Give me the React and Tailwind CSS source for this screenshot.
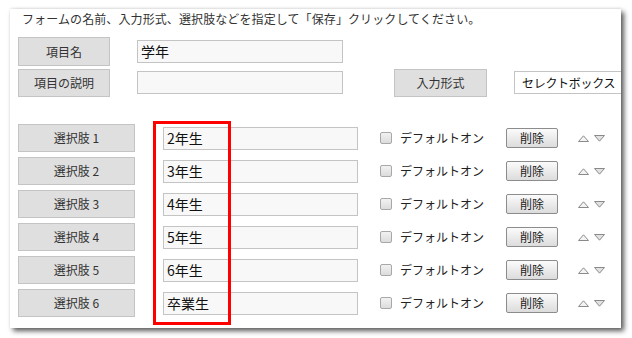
import React from "react";

const font = { fontFamily: '"Noto Sans CJK JP", "Noto Sans", sans-serif' };

const choices = ["2年生", "3年生", "4年生", "5年生", "6年生", "卒業生"];

const Label = ({ children, className = "" }) => (
  <div
    className={`shrink-0 flex items-center justify-center bg-[#dfdfdf] border border-[#c4c4c4] text-[12px] text-[#333] ${className}`}
  >
    {children}
  </div>
);

const TextBox = ({ value, className = "" }) => (
  <div
    className={`shrink-0 flex items-center bg-[#f8f8f8] border border-[#c4c4c4] px-[3px] text-[14px] text-[#111] ${className}`}
  >
    {value}
  </div>
);

const Arrows = () => (
  <div className="flex items-center gap-[5px]">
    <svg width="11" height="7" viewBox="0 0 11 7">
      <path d="M0.5 6.5 L5.5 0.8 L10.5 6.5 Z" fill="#f4f4f4" stroke="#8a8a8a" strokeWidth="1" />
    </svg>
    <svg width="11" height="7" viewBox="0 0 11 7">
      <path d="M0.5 0.5 L10.5 0.5 L5.5 6.2 Z" fill="#e2e2e2" stroke="#8a8a8a" strokeWidth="1" />
    </svg>
  </div>
);

const ChoiceRow = ({ index, value }) => (
  <div className="flex items-center h-[28px] mb-[5px]">
    <Label className="ml-[8px] w-[117px] h-[28px]">選択肢 {index}</Label>
    <TextBox value={value} className="ml-[28px] w-[195px] h-[23px]" />
    <div className="shrink-0 ml-[22px] w-[12px] h-[12px] rounded-[2px] border border-[#a8a8a8] bg-gradient-to-b from-[#f2f2f2] to-[#dcdcdc]" />
    <div className="shrink-0 ml-[8px] w-[106px] text-[12px] text-[#222] leading-none">デフォルトオン</div>
    <div className="shrink-0 w-[52px] h-[20px] flex items-center justify-center rounded-[2px] border border-[#8c8c8c] bg-gradient-to-b from-[#fbfbfb] to-[#dcdcdc] text-[12px] text-[#222]">
      削除
    </div>
    <div className="shrink-0 ml-[20px]">
      <Arrows />
    </div>
  </div>
);

export default function App() {
  return (
    <div className="w-[632px] h-[338px] bg-white pt-[9px] pl-[10px] overflow-hidden" style={font}>
      <div className="relative w-[611px] h-[319px] bg-white shadow-[3px_3px_5px_rgba(0,0,0,0.65),0_-1px_2px_rgba(0,0,0,0.08)] overflow-hidden">
        <p className="pl-[12px] pt-[1px] h-[28px] text-[12px] leading-[18px] tracking-[0.1px] text-[#333]">
          フォームの名前、入力形式、選択肢などを指定して「保存」クリックしてください。
        </p>

        <div className="flex items-center h-[29px]">
          <Label className="ml-[8px] w-[92px] h-[29px]">項目名</Label>
          <TextBox value="学年" className="ml-[27px] w-[206px] h-[23px]" />
        </div>
        <div className="flex items-center h-[29px] mt-[2px]">
          <Label className="ml-[8px] w-[92px] h-[28px]">項目の説明</Label>
          <TextBox value="" className="ml-[27px] w-[206px] h-[23px]" />
          <Label className="ml-[51px] w-[93px] h-[28px]">入力形式</Label>
          <div className="shrink-0 ml-[27px] w-[120px] h-[23px] flex items-center border border-[#c4c4c4] bg-white pl-[7px] text-[12px] tracking-[-0.3px] text-[#111] whitespace-nowrap">
            セレクトボックス
          </div>
        </div>

        <div className="mt-[27px]">
          {choices.map((c, i) => (
            <ChoiceRow key={i} index={i + 1} value={c} />
          ))}
        </div>

        <div className="absolute left-[143px] top-[112px] w-[78px] h-[204px] border-[3px] border-[#f00]" />
      </div>
    </div>
  );
}
